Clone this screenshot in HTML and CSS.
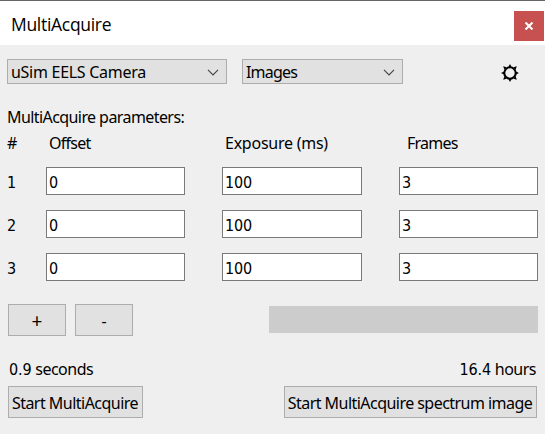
FILE: index.html
```html
<!DOCTYPE html>
<html lang="en">
<head>
<meta charset="utf-8">
<title>MultiAcquire</title>
<link rel="stylesheet" href="styles.css">
</head>
<body>
<header class="titlebar">
  <h1 class="title">MultiAcquire</h1>
  <button class="close" aria-label="Close"><svg width="10" height="8" viewBox="0 0 10 8"><path d="M1.5 .5 8.5 7.5M8.5 .5 1.5 7.5" stroke="#fff" stroke-width="2.1"/></svg></button>
</header>
<main class="panel">
  <div class="toolbar">
    <div class="select camera"><span class="camera-text">uSim EELS Camera</span><svg class="chevron" width="12" height="7" viewBox="0 0 12 7"><path d="M1 .8 6 5.8 11 .8"/></svg></div>
    <div class="select mode"><span class="mode-text">Images</span><svg class="chevron" width="12" height="7" viewBox="0 0 12 7"><path d="M1 .8 6 5.8 11 .8"/></svg></div>
    <svg class="gear" width="18" height="18" viewBox="0 0 18 18"><circle cx="9" cy="9" r="5.7" fill="none" stroke="#000" stroke-width="2"/><path d="M9 0l1.6 3H7.4zM9 18l1.6-3H7.4zM0 9l3-1.6v3.2zM18 9l-3-1.6v3.2zM2.2 2.2l3.4 1.1-2.3 2.3zM15.8 2.2l-3.4 1.1 2.3 2.3zM2.2 15.8l3.4-1.1-2.3-2.3zM15.8 15.8l-3.4-1.1 2.3-2.3z"/></svg>
  </div>
  <div class="caption">MultiAcquire parameters:</div>
  <div class="row head"><span>#</span><span class="label offset">Offset</span><span class="label exposure">Exposure (ms)</span><span class="label frames">Frames</span></div>
  <div class="rows">
    <div class="row"><span class="num">1</span><div class="field">0</div><div class="field">100</div><div class="field">3</div></div>
    <div class="row"><span class="num">2</span><div class="field">0</div><div class="field">100</div><div class="field">3</div></div>
    <div class="row"><span class="num">3</span><div class="field">0</div><div class="field">100</div><div class="field">3</div></div>
  </div>
  <div class="controls">
    <button class="button small plus">+</button>
    <button class="button small">-</button>
    <div class="progress"></div>
  </div>
  <div class="times"><span class="time"><span class="digits">0.9</span> seconds</span><span class="time"><span class="digits">16.4</span> hours</span></div>
  <div class="actions">
    <button class="button start">Start MultiAcquire</button>
    <button class="button spectrum">Start MultiAcquire spectrum image</button>
  </div>
</main>
</body>
</html>
```
FILE: styles.css
```css
* { box-sizing: border-box; }
body {
  margin: 0;
  width: 545px;
  height: 434px;
  overflow: hidden;
  background: #efefef;
  color: #000;
  font: 16px/20px "Noto Sans", sans-serif;
  white-space: nowrap;
}
button { font: inherit; color: inherit; padding: 0; border: 0; }
.titlebar {
  height: 45px;
  display: flex;
  align-items: flex-start;
  justify-content: space-between;
  background: #fff;
  border-top: 1px solid #666;
  padding: 10px 1px 0 11px;
}
.title { margin: 1px 0 0; font: 17.5px/24px "Open Sans", sans-serif; letter-spacing: -.3px; }
.close {
  width: 30px;
  height: 30px;
  display: flex;
  align-items: center;
  justify-content: center;
  background: #c75050;
}
.panel { padding: 14px 7px 0; }
.toolbar { display: flex; align-items: center; height: 25px; }
.select {
  height: 25px;
  display: flex;
  align-items: center;
  justify-content: space-between;
  border: 1px solid #adadad;
  background: #e1e1e1;
  padding: 1px 7px 0 3px;
}
.camera { width: 220px; margin-right: 15px; letter-spacing: -.28px; }
.mode { width: 161px; letter-spacing: -.8px; }
.chevron { fill: none; stroke: #444; stroke-width: 1.2; }
.gear { margin: 3px 0 0 97.5px; }
.caption { margin-top: 23px; height: 20px; letter-spacing: -.58px; }
.row {
  display: grid;
  grid-template-columns: 2px 139px 140px 139px;
  column-gap: 37px;
  align-items: center;
}
.head { margin-top: 6px; height: 20px; }
.label { padding-left: 3px; }
.offset { letter-spacing: -.75px; }
.exposure { letter-spacing: -.25px; }
.frames { padding-left: 8px; letter-spacing: -.75px; }
.rows { display: grid; gap: 15px; margin-top: 14px; }
.num, .field, .digits { font-family: "DejaVu Sans Condensed", "DejaVu Sans", sans-serif; font-stretch: condensed; letter-spacing: -.1px; }
.field {
  height: 28px;
  border: 1px solid #7a7a7a;
  background: #fff;
  padding: 5px 2px 0;
}
.num { padding-top: 3px; }
.controls { display: flex; gap: 9px; margin: 23px 0 0 1px; height: 32px; }
.button { height: 32px; border: 1px solid #adadad; background: #e1e1e1; padding-top: 2px; }
.small { width: 58px; }
.plus { font-size: 19px; }
.progress { width: 269px; height: 27px; margin: 2px 0 0 127px; background: #ccc; }
.times { display: flex; justify-content: space-between; margin-top: 23px; padding: 0 2px; height: 20px; letter-spacing: -.5px; }
.actions { display: flex; justify-content: space-between; margin: 7px 1px 0; }
.start { width: 135px; padding-right: 1px; letter-spacing: -.52px; }
.spectrum { width: 253px; padding-right: 1px; letter-spacing: -.54px; }
```
